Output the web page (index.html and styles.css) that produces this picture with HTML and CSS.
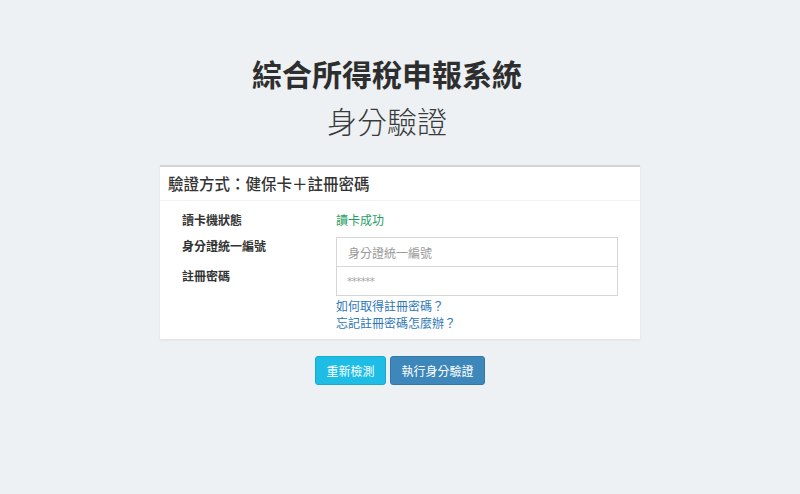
FILE: index.html
```html
<!DOCTYPE html>
<html lang="zh-Hant">
<head>
<meta charset="utf-8">
<title>身分驗證</title>
<link rel="stylesheet" href="styles.css">
</head>
<body>
<div class="page">
  <h1 class="title">綜合所得稅申報系統</h1>
  <h2 class="subtitle">身分驗證</h2>
  <div class="panel">
    <div class="panel-head">驗證方式：健保卡＋註冊密碼</div>
    <div class="panel-body">
      <div class="label row1">讀卡機狀態</div>
      <div class="value status row1">讀卡成功</div>
      <div class="label row2">身分證統一編號</div>
      <div class="value row2"><input class="field" type="text" placeholder="身分證統一編號"></div>
      <div class="label row3">註冊密碼</div>
      <div class="value row3">
        <input class="field field-pw" type="text" placeholder="******">
        <a class="link" href="#">如何取得註冊密碼？</a>
        <a class="link" href="#">忘記註冊密碼怎麼辦？</a>
      </div>
    </div>
  </div>
  <div class="actions">
    <button class="btn btn-info" type="button">重新檢測</button>
    <button class="btn btn-primary" type="button">執行身分驗證</button>
  </div>
</div>
</body>
</html>
```
FILE: styles.css
```css
html, body {
  margin: 0;
  padding: 0;
}
body {
  background: #edf1f4;
  font-family: "Noto Sans CJK TC", "Noto Sans", "Liberation Sans", sans-serif;
  color: #333;
}
.page {
  width: 800px;
  height: 494px;
  display: flex;
  flex-direction: column;
  align-items: center;
}
.title {
  margin: 53px 26px 0 0;
  font-size: 30px;
  font-weight: 700;
  line-height: 40px;
  color: #2e2e2e;
}
.subtitle {
  margin: 7px 26px 0 0;
  font-size: 30px;
  font-weight: 300;
  line-height: 40px;
  color: #3a3a3a;
}
.panel {
  margin-top: 25px;
  width: 480px;
  background: #fff;
  border-top: 2px solid #d3d6d9;
  box-shadow: 0 1px 2px rgba(0, 0, 0, 0.08);
}
.panel-head {
  height: 33px;
  line-height: 33px;
  padding-left: 8px;
  font-size: 15.5px;
  font-weight: 500;
  color: #333;
  border-bottom: 1px solid #f1f1f1;
}
.panel-body {
  display: grid;
  grid-template-columns: 154px 282px;
  padding: 10px 0 8px 22px;
  font-size: 12px;
  line-height: 17px;
}
.label {
  font-weight: 700;
  color: #333;
}
.row1 {
  margin-bottom: 9px;
}
.status {
  color: #1f9e63;
}
.value {
  display: flex;
  flex-direction: column;
}
.field {
  box-sizing: border-box;
  width: 282px;
  height: 30px;
  margin: 0;
  padding: 0 11px;
  border: 1px solid #d6d6d6;
  border-radius: 0;
  font-family: inherit;
  font-size: 12px;
  color: #555;
  background: #fff;
  outline: none;
}
.field::placeholder {
  color: #9a9a9a;
}
.field-pw {
  margin-top: -1px;
  padding-left: 10px;
  font-family: "DejaVu Sans", sans-serif;
}
.field-pw::placeholder {
  font-size: 11px;
  letter-spacing: -1px;
  color: #aaa;
}
.link {
  color: #2f78b6;
  text-decoration: none;
  font-size: 12px;
  line-height: 17px;
}
.field-pw + .link {
  margin-top: 1px;
}
.actions {
  margin-top: 17px;
  display: flex;
  gap: 4px;
}
.btn {
  height: 29px;
  padding: 0;
  border-radius: 3px;
  font-family: inherit;
  font-size: 12px;
  color: #fff;
  cursor: pointer;
}
.btn-info {
  width: 71px;
  background: #1dbde6;
  border: 1px solid #17a9d0;
}
.btn-primary {
  width: 95px;
  background: #3e87ba;
  border: 1px solid #3577a6;
}
```
